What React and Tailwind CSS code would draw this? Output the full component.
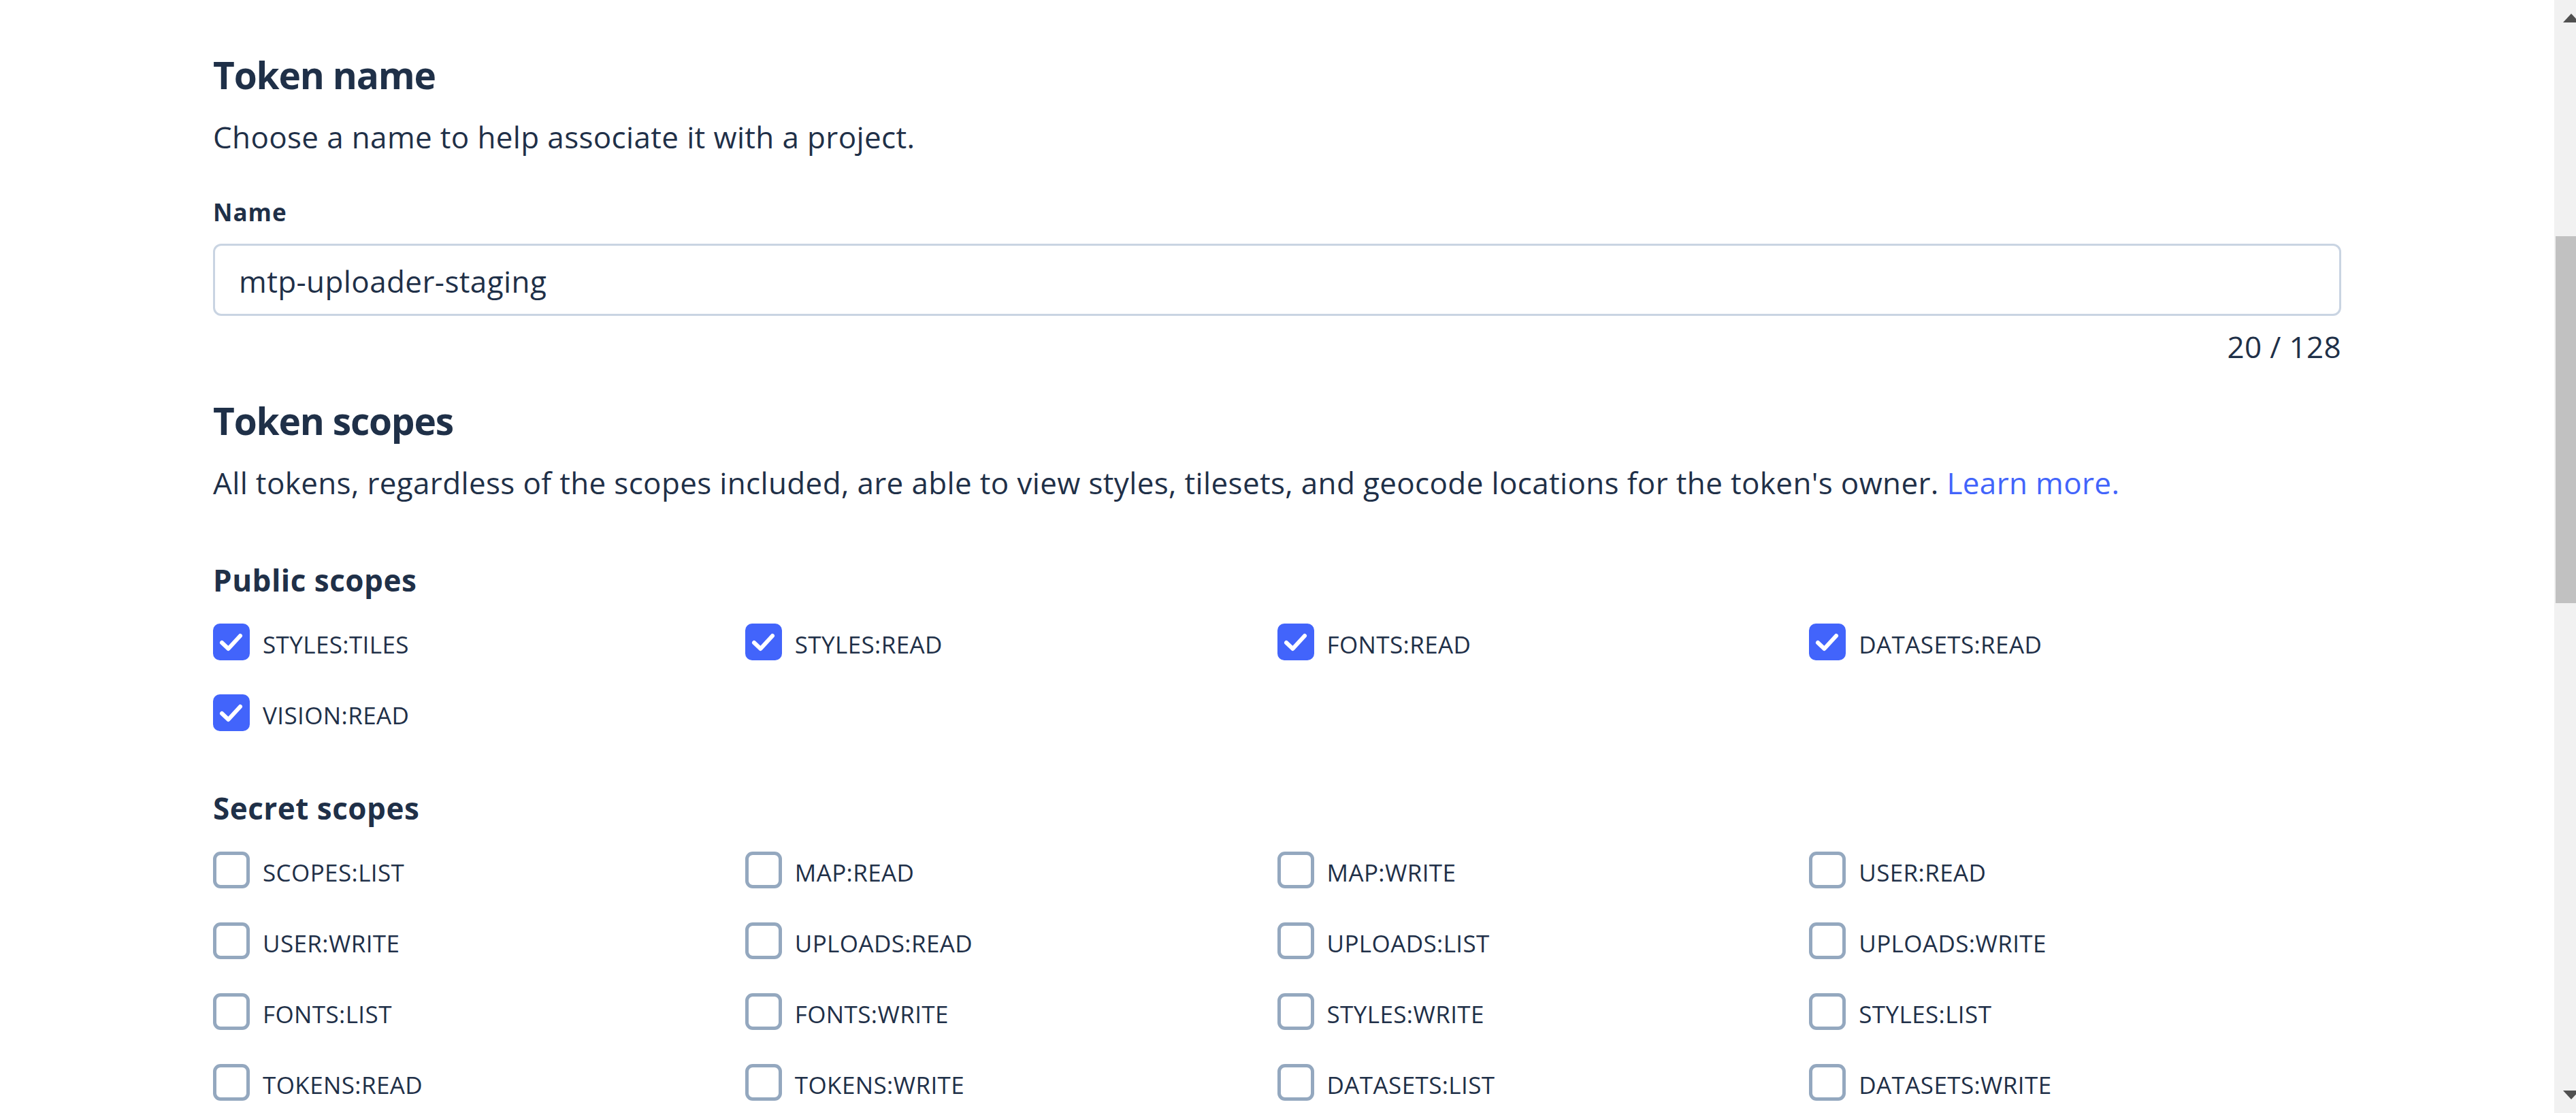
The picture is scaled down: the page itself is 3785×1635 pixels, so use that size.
import React from 'react';

const publicScopes = [
  { name: 'STYLES:TILES', checked: true },
  { name: 'STYLES:READ', checked: true },
  { name: 'FONTS:READ', checked: true },
  { name: 'DATASETS:READ', checked: true },
  { name: 'VISION:READ', checked: true },
];

const secretScopes = [
  'SCOPES:LIST', 'MAP:READ', 'MAP:WRITE', 'USER:READ',
  'USER:WRITE', 'UPLOADS:READ', 'UPLOADS:LIST', 'UPLOADS:WRITE',
  'FONTS:LIST', 'FONTS:WRITE', 'STYLES:WRITE', 'STYLES:LIST',
  'TOKENS:READ', 'TOKENS:WRITE', 'DATASETS:LIST', 'DATASETS:WRITE',
].map((name) => ({ name, checked: false }));

const ScopeCheckbox = ({ name, checked }) => (
  <label className="flex items-center h-[54px] gap-[19px] cursor-pointer">
    {checked ? (
      <span className="w-[54px] h-[54px] shrink-0 rounded-[10px] bg-[#4264fb] flex items-center justify-center">
        <svg width="54" height="54" viewBox="0 0 54 54" fill="none">
          <polyline points="13,28 22.5,37 40,18" stroke="#fff" strokeWidth="6" strokeLinecap="round" strokeLinejoin="round" />
        </svg>
      </span>
    ) : (
      <span className="w-[54px] h-[54px] shrink-0 rounded-[11px] border-[5px] border-[#94a8bf] bg-white" />
    )}
    <span className="text-[35px] leading-[48px] tracking-[0.4px] pt-[7px]">{name}</span>
  </label>
);

const ScopeGrid = ({ scopes }) => (
  <div className="grid grid-cols-4 gap-y-[50px]">
    {scopes.map((s) => (
      <ScopeCheckbox key={s.name} {...s} />
    ))}
  </div>
);

const App = () => {
  return (
    <div className="flex h-[1635px] overflow-hidden bg-white text-[#1f3048] font-['Open_Sans',sans-serif]">
      <main className="flex-1 min-w-0">
        <div className="w-[3127px] mx-auto pt-[75px]">
          {/* Token name */}
          <h2 className="text-[55px] leading-[70px] tracking-[-1.2px] font-bold">Token name</h2>
          <p className="mt-[25px] text-[44px] leading-[63px] tracking-[0.35px]">Choose a name to help associate it with a project.</p>

          <label className="block mt-[58px] text-[35px] leading-[42px] tracking-[1px] font-bold">Name</label>
          <input
            readOnly
            value="mtp-uploader-staging"
            className="mt-[25px] block w-full h-[106px] pt-[4px] px-[35px] rounded-[12px] border-[3px] border-[#c9d4e2] bg-white text-[44px] tracking-[0.4px] text-[#1f3048] outline-none font-['Open_Sans',sans-serif]"
          />
          <div className="mt-[14px] text-right text-[44px] leading-[63px] tracking-[0.35px]">20 / 128</div>

          {/* Token scopes */}
          <h2 className="mt-[42px] text-[55px] leading-[70px] tracking-[-1.2px] font-bold">Token scopes</h2>
          <p className="mt-[25px] text-[44px] leading-[63px] tracking-[0.35px]">
            All tokens, regardless of the scopes included, are able to view styles, tilesets, and geocode locations for the token's owner.{' '}
            <a href="#" className="text-[#4264fb]">Learn more.</a>
          </p>

          <h3 className="mt-[80px] text-[44px] leading-[63px] tracking-[0.5px] font-bold">Public scopes</h3>
          <div className="mt-[32px]">
            <ScopeGrid scopes={publicScopes} />
          </div>

          <h3 className="mt-[82px] text-[44px] leading-[63px] tracking-[0.5px] font-bold">Secret scopes</h3>
          <div className="mt-[32px]">
            <ScopeGrid scopes={secretScopes} />
          </div>
        </div>
      </main>

      {/* browser scrollbar */}
      <aside className="w-[32px] shrink-0 bg-[#f1f1f1] flex flex-col overflow-hidden">
        <div className="h-[347px] pt-[20px] pl-[13px]">
          <svg width="24" height="13" viewBox="0 0 24 13">
            <polygon points="0,13 12,0 24,13" fill="#505050" />
          </svg>
        </div>
        <div className="h-[539px] ml-[2px] bg-[#c1c1c1]" />
        <div className="flex-1" />
        <div className="pb-[20px] pl-[13px] h-[33px]">
          <svg width="24" height="13" viewBox="0 0 24 13">
            <polygon points="0,0 24,0 12,13" fill="#505050" />
          </svg>
        </div>
      </aside>
    </div>
  );
};

export default App;
